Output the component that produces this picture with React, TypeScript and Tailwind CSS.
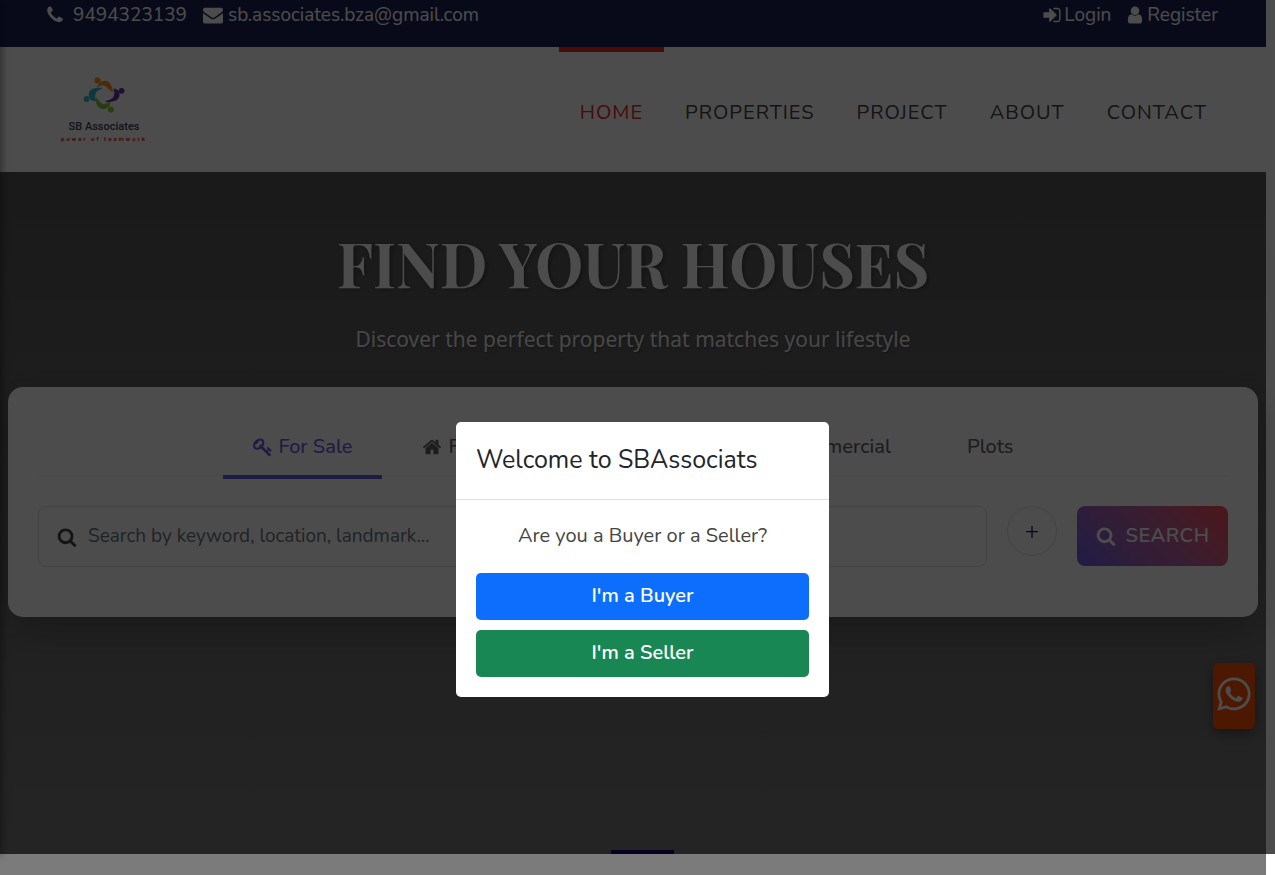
import React, { useState } from 'react';
import { FaWhatsapp } from 'react-icons/fa';

const ICONS = {
  phone: 'M1600 1240q0 27-10 70.5t-20.5 68.5q-21 50-122 106-94 51-186 51-27 0-52.5-3.5t-57.5-12.5-47.5-14.5-55.5-20.5-49-18q-98-35-175-83-128-79-264.5-215.5t-215.5-264.5q-48-77-83-175-3-9-18-49t-20.5-55.5-14.5-47.5-12.5-57.5-3.5-52.5q0-92 51-186 56-101 106-122 25-10 68.5-20.5t70.5-10.5q14 0 21 3 18 6 53 76 11 19 30 54t35 63.5 31 53.5q3 4 17.5 25t21.5 35.5 7 28.5q0 20-28.5 50t-62 55-62 53-28.5 46q0 9 5 22.5t8.5 20.5 14 24 11.5 19q76 137 174 235t235 174q2 1 19 11.5t24 14 20.5 8.5 22.5 5q18 0 46-28.5t53-62 55-62 50-28.5q14 0 28.5 7t35.5 21.5 25 17.5q25 15 53.5 31t63.5 35 54 30q70 35 76 53 3 7 3 21z',
  envelope: 'M1792 710v794q0 66-47 113t-113 47h-1472q-66 0-113-47t-47-113v-794q44 49 101 87 362 246 497 345 57 42 92.5 65.5t94.5 48 110 24.5h2q51 0 110-24.5t94.5-48 92.5-65.5q170-123 498-345 57-39 100-87zm0-294q0 79-49 151t-122 123q-376 261-468 325-10 7-42.5 31t-54 38.5-52 32.5-57.5 27-50 9h-2q-23 0-50-9t-57.5-27-52-32.5-54-38.5-42.5-31q-91-64-262-182.5t-205-142.5q-62-42-117-115.5t-55-136.5q0-78 41.5-130t118.5-52h1472q65 0 112.5 47t47.5 113z',
  search: 'M1216 832q0-185-131.5-316.5t-316.5-131.5-316.5 131.5-131.5 316.5 131.5 316.5 316.5 131.5 316.5-131.5 131.5-316.5zm512 832q0 52-38 90t-90 38q-54 0-90-38l-343-342q-179 124-399 124-143 0-273.5-55.5t-225-150-150-225-55.5-273.5 55.5-273.5 150-225 225-150 273.5-55.5 273.5 55.5 225 150 150 225 55.5 273.5q0 220-124 399l343 343q37 37 37 90z',
  user: 'M1536 1399q0 109-62.5 187t-150.5 78h-854q-88 0-150.5-78t-62.5-187q0-85 8.5-160.5t31.5-152 58.5-131 94-89 134.5-34.5q131 128 313 128t313-128q76 0 134.5 34.5t94 89 58.5 131 31.5 152 8.5 160.5zm-256-887q0 159-112.5 271.5t-271.5 112.5-271.5-112.5-112.5-271.5 112.5-271.5 271.5-112.5 271.5 112.5 112.5 271.5z',
  home: 'M1472 992v480q0 26-19 45t-45 19h-384v-384h-256v384h-384q-26 0-45-19t-19-45v-480q0-1 .5-3t.5-3l575-474 575 474q1 2 1 6zm223-69l-62 74q-8 9-21 11h-3q-13 0-21-7l-692-577-692 577q-12 8-24 7-13-2-21-11l-62-74q-8-10-7-23.5t11-21.5l719-599q32-26 76-26t76 26l244 204v-195q0-14 9-23t23-9h192q14 0 23 9t9 23v408l219 182q10 8 11 21.5t-7 23.5z',
  signIn: 'M1312 896q0 26-19 45l-544 544q-19 19-45 19t-45-19-19-45v-288h-448q-26 0-45-19t-19-45v-384q0-26 19-45t45-19h448v-288q0-26 19-45t45-19 45 19l544 544q19 19 19 45zm352-352v704q0 119-84.5 203.5t-203.5 84.5h-320q-13 0-22.5-9.5t-9.5-22.5q0-4-1-20t-.5-26.5 3-23.5 10-19.5 20.5-6.5h320q66 0 113-47t47-113v-704q0-66-47-113t-113-47h-312l-11.5-1-11.5-3-8-5.5-7-9-2-13.5q0-4-1-20t-.5-26.5 3-23.5 10-19.5 20.5-6.5h320q119 0 203.5 84.5t84.5 203.5z',
  key: 'M832 512q0-80-56-136t-136-56-136 56-56 136q0 42 19 83-41-19-83-19-80 0-136 56t-56 136 56 136 136 56 136-56 56-136q0-42-19-83 41 19 83 19 80 0 136-56t56-136zm851 704q0 17-49 66t-66 49q-9 0-28.5-16t-36.5-33-38.5-40-24.5-26l-96 96 220 220q28 28 28 68 0 42-39 81t-81 39q-40 0-68-28l-671-671q-176 131-365 131-163 0-265.5-102.5t-102.5-265.5q0-160 95-313t248-248 313-95q163 0 265.5 102.5t102.5 265.5q0 189-131 365l355 355 96-96q-3-3-26-24.5t-40-38.5-33-36.5-16-28.5q0-17 49-66t66-49q13 0 23 10 6 6 46 44.5t82 79.5 86.5 86 73 78 28.5 41z',
};

function Icon({ name, className = 'size-5' }: { name: keyof typeof ICONS; className?: string }) {
  return (
    <svg viewBox="0 0 1792 1792" fill="currentColor" className={`shrink-0 ${className}`} aria-hidden="true">
      <path d={ICONS[name]} />
    </svg>
  );
}

const navItems = ['Home', 'Properties', 'Project', 'About', 'Contact'];

function TopBar() {
  return (
    <div className="flex h-[47px] items-start justify-between bg-[#1f2456] pr-12 pl-[45px] text-[19px] leading-[30px] text-white">
      <div className="flex gap-4">
        <a href="tel:9494323139" className="flex items-center gap-2">
          <Icon name="phone" />
          9494323139
        </a>
        <a href="mailto:sb.associates.bza@gmail.com" className="flex items-center gap-[5px]">
          <Icon name="envelope" />
          sb.associates.bza@gmail.com
        </a>
      </div>
      <div className="flex gap-[14px]">
        <a href="#login" className="flex items-center gap-[2px]">
          <Icon name="signIn" />
          Login
        </a>
        <a href="#register" className="flex items-center gap-[2px]">
          <Icon name="user" />
          Register
        </a>
      </div>
    </div>
  );
}

function Logo() {
  return (
    <a href="#home" className="flex w-[88px] flex-col items-center">
      <svg viewBox="0 0 42 36" className="h-9 w-[42px]" aria-hidden="true">
        <g fill="#f7941d">
          <circle cx="14.5" cy="3.4" r="3" />
          <path d="M14.3 11C15 6 19.500 2.800 24 4.200c4 1.300 4.600 5 5.600 8.300 .8 1.500 1.800 2.200 1.200 2.500-4.300-.6-5.800-4-8.800-6-2.500-1.500-5.200-.2-7.700 2z" />
        </g>
        <g fill="#6b2fa0">
          <circle cx="38.600" cy="13.800" r="2.900" />
          <path d="M30.500 11.500c4.500 0 7 4 5.800 8-1.500 4.800-7.500 5.600-14.300 5.600 2-2.300 5.700-1.600 8-4.500 2-2.800 1.700-6 .5-9.100z" />
        </g>
        <g fill="#3fb4d0">
          <circle cx="3.600" cy="22" r="2.900" />
          <path d="M9 24C4.500 20 4.800 14.500 9 12c3.300-1.800 7-1.200 10.800-1.200-2 2-4.800 2.300-6.300 4.200-2 2.500-1.300 5.500-.5 9z" />
        </g>
        <g fill="#8cc63f">
          <circle cx="27.800" cy="32.400" r="3" />
          <path d="M12.600 20.500c3.500 1.800 4.300 6 7.400 6.500 2.800.4 4.800-1.500 7.300-2.500.3 4.500-3.300 8-7.300 7.600-5.500-.5-7.400-5.600-7.400-11.600z" />
        </g>
      </svg>
      <span className="mt-[7px] font-['Roboto',sans-serif] text-[11px] leading-[14px] font-medium whitespace-nowrap text-[#3b3f5c]">SB Associates</span>
      <span className="font-['Roboto',sans-serif] text-[6px] leading-[10px] font-bold tracking-[2px] whitespace-nowrap text-[#d8232a]">power of teamwork</span>
    </a>
  );
}

function Header() {
  return (
    <header className="flex h-[125px] justify-between bg-white pr-[38px] pl-[60px]">
      <div className="pt-[30px]">
        <Logo />
      </div>
      <nav className="flex">
        {navItems.map((item, i) => (
          <a
            key={item}
            href={`#${item.toLowerCase()}`}
            className={`border-t-[5px] px-[21px] pt-[45px] text-xl leading-[31px] tracking-[1px] uppercase ${
              i === 0 ? 'border-[#e8281e] text-[#e8281e]' : 'border-transparent text-[#444444]'
            }`}
          >
            {item}
          </a>
        ))}
      </nav>
    </header>
  );
}

function Tab({ label, icon, active, onClick }: { label: string; icon?: keyof typeof ICONS; active: boolean; onClick: () => void }) {
  return (
    <button
      type="button"
      onClick={onClick}
      className={`flex h-[62px] items-center gap-[6px] border-b-4 px-[30px] pt-[2px] text-xl font-medium ${
        active ? 'border-[#6c5ce7] text-[#6c5ce7]' : 'border-transparent text-[#636363]'
      }`}
    >
      {icon && <Icon name={icon} />}
      {label}
    </button>
  );
}

function SearchCard() {
  const [tab, setTab] = useState('For Sale');

  return (
    <div className="rounded-[15px] bg-white px-[30px] pt-[30px] pb-[50px] shadow-[0_15px_35px_rgba(0,0,0,0.2)]">
      <div className="mb-[30px] flex h-[59px] justify-center border-b border-[#f0f0f0]">
        <div className="flex w-full max-w-[821px] justify-between">
          <div className="flex gap-[10px]">
            <Tab label="For Sale" icon="key" active={tab === 'For Sale'} onClick={() => setTab('For Sale')} />
            <Tab label="For Rent" icon="home" active={tab === 'For Rent'} onClick={() => setTab('For Rent')} />
          </div>
          <div className="flex gap-4">
            <Tab label="Commercial" active={tab === 'Commercial'} onClick={() => setTab('Commercial')} />
            <Tab label="Plots" active={tab === 'Plots'} onClick={() => setTab('Plots')} />
          </div>
        </div>
      </div>
      <form className="flex items-start" onSubmit={(e) => e.preventDefault()}>
        <label className="flex h-[61px] flex-1 items-center gap-[11px] rounded-lg border border-[#e0e0e0] px-[18px] text-[#444444]">
          <Icon name="search" />
          <input
            type="text"
            aria-label="Search properties"
            placeholder="Search by keyword, location, landmark..."
            className="w-full bg-transparent text-[19px] outline-none placeholder:text-[#6c757d]"
          />
        </label>
        <button
          type="button"
          aria-label="More filters"
          className="mx-5 flex size-[50px] items-center justify-center rounded-full border border-[#e0e0e0] text-2xl font-light text-[#222222]"
        >
          +
        </button>
        <button
          type="submit"
          className="flex h-[60px] w-[151px] items-center justify-center gap-[10px] rounded-lg bg-linear-45 from-[#6c5ce7] to-[#ff4757] text-xl font-semibold tracking-wide text-white"
        >
          <Icon name="search" />
          SEARCH
        </button>
      </form>
    </div>
  );
}

function WelcomeModal() {
  return (
    <div className="absolute inset-0 flex items-start justify-center bg-black/70 pt-[422px] pl-[10px]">
      <div role="dialog" aria-labelledby="welcome-title" className="w-[373px] rounded-[5px] bg-white">
        <div className="border-b border-[#dee2e6] px-5 py-5">
          <h5 id="welcome-title" className="text-[25px] leading-[37px] text-[#212529]">Welcome to SBAssociats</h5>
        </div>
        <div className="flex flex-col p-5 text-center text-xl leading-[31px]">
          <p className="mb-[22px] text-[#444444]">Are you a Buyer or a Seller?</p>
          <button type="button" className="mb-[10px] h-[47px] rounded-[5px] bg-[#0d6efd] pb-[2px] font-semibold text-white">
            I'm a Buyer
          </button>
          <button type="button" className="h-[47px] rounded-[5px] bg-[#198754] pb-[2px] font-semibold text-white">
            I'm a Seller
          </button>
        </div>
      </div>
    </div>
  );
}

export default function App() {
  return (
    <div className="flex h-screen flex-col overflow-hidden bg-white font-['Nunito','Open_Sans',sans-serif]">
      <div className="relative flex min-h-0 flex-1 flex-col pr-[9px]">
        <TopBar />
        <Header />
        <main className="flex flex-1 flex-col bg-linear-to-b from-[#575757] to-[#7b7b7b] px-2">
          <h1 className="mt-[55px] text-center font-['Playfair_Display','Liberation_Serif',serif] text-[61px] leading-[72px] font-bold text-white [text-shadow:2px_2px_4px_rgba(0,0,0,0.3)]">
            FIND YOUR HOUSES
          </h1>
          <p className="mt-[23px] mb-[30px] text-center font-['Noto_Sans',sans-serif] text-[21px] leading-[35px] text-[#eeeeee] [text-shadow:1px_1px_2px_rgba(0,0,0,0.3)]">
            Discover the perfect property that matches your lifestyle
          </p>
          <SearchCard />
          <div className="mt-auto flex justify-center pl-[18px]">
            <div className="h-1 w-[63px] bg-[#1c0068]" />
          </div>
        </main>
        <a
          href="#whatsapp"
          aria-label="WhatsApp"
          className="absolute top-[663px] right-5 flex h-[66px] w-[42px] items-center justify-center rounded-[5px] bg-[#ff5500] pb-1 text-white shadow-[0_4px_12px_rgba(0,0,0,0.4)]"
        >
          <FaWhatsapp size={38} />
        </a>
        <div className="absolute inset-y-0 -left-1 w-1 shadow-[0_0_8px_rgba(0,0,0,0.8)]" />
        <WelcomeModal />
      </div>
      <div className="mr-[9px] h-[21px] bg-[#7b7b7b]" />
    </div>
  );
}
